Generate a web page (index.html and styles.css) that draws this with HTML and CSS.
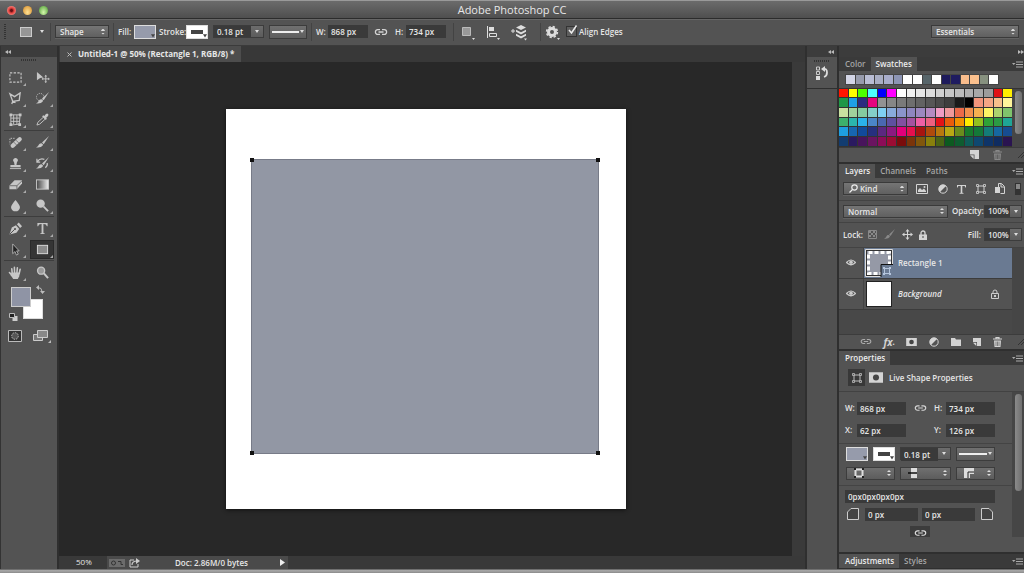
FILE: index.html
```html
<!DOCTYPE html>
<html lang="en">
<head>
<meta charset="utf-8">
<title>Adobe Photoshop CC</title>
<link rel="stylesheet" href="styles.css">
</head>
<body>
<svg class="defs" aria-hidden="true">
  <symbol id="link" viewBox="0 0 14 8"><path d="M6 1.600H3.800a2.400 2.400 0 0 0 0 4.800H6M8 1.600h2.200a2.400 2.400 0 0 1 0 4.800H8M4.500 4h5" fill="none" stroke="currentColor" stroke-width="1.300"/></symbol>
  <symbol id="menu" viewBox="0 0 11 7"><path d="M0 2h3.500L1.700 4z" fill="currentColor"/><path d="M4 1h7M4 3.500h7M4 6h7" stroke="currentColor"/></symbol>
  <symbol id="new" viewBox="0 0 9 9"><path d="M0 0h9v9H4.500V4.500H0z" fill="currentColor"/><path d="M0 5.300h3.700V9z" fill="currentColor"/></symbol>
  <symbol id="trash" viewBox="0 0 9 10"><path d="M0 2h9M3 2V.6h3V2" fill="none" stroke="currentColor" stroke-width="1.200"/><path d="M1 3.500h7L7.500 10h-6z" fill="currentColor"/><path d="M3 4.500V9M4.500 4.500V9M6 4.500V9" stroke="#444" stroke-width=".6"/></symbol>
  <symbol id="eye" viewBox="0 0 10 7"><path d="M.5 3.500Q5-1.500 9.500 3.500Q5 8 .5 3.500z" fill="none" stroke="currentColor" stroke-width="1.200"/><circle cx="5" cy="3.300" r="1.800" fill="currentColor"/></symbol>
  <symbol id="lock" viewBox="0 0 8 10"><path d="M2 5V3a2 2 0 0 1 4 0v2" fill="none" stroke="currentColor" stroke-width="1.300"/><path d="M0 4.500h8V10H0z" fill="currentColor"/><path d="M4 6v2" stroke="#444"/></symbol>
  <symbol id="mask" viewBox="0 0 12 9"><path d="M0 0h12v9H0z" fill="currentColor"/><circle cx="6" cy="4.500" r="2.600" fill="#444"/></symbol>
  <symbol id="adjust" viewBox="0 0 10 10"><circle cx="5" cy="5" r="4.200" fill="none" stroke="currentColor"/><path d="M8 2A4.200 4.200 0 1 0 2 8z" fill="currentColor"/></symbol>
  <symbol id="shape" viewBox="0 0 10 10"><path d="M2 2h6v6H2z" fill="none" stroke="currentColor"/><path d="M.5.5h2v2h-2zM7.500.5h2v2h-2zM.5 7.500h2v2h-2zM7.500 7.500h2v2h-2z" fill="#555" stroke="currentColor" stroke-width=".8"/></symbol>
  <symbol id="collapse" viewBox="0 0 6 4"><path d="M3 0v4L0 2zM6 0v4L3 2z" fill="currentColor"/></symbol>
  <symbol id="expand" viewBox="0 0 6 4"><path d="M0 0v4l3-2zM3 0v4l3-2z" fill="currentColor"/></symbol>
  <symbol id="grip" viewBox="0 0 6 6"><path d="M0 6L6 0M3 6l3-3" stroke="#333"/></symbol>
  <symbol id="brush" viewBox="0 0 16 14"><path d="M15 0L7.500 7l1.800 1.800z" fill="currentColor"/><path d="M6.800 7.700q2.500.8 1.500 2.500Q6.500 13 1 12.300q2.500-.8 3-2.800.8-2 2.800-1.800z" fill="currentColor"/></symbol>
</svg>

<div class="app">
  <header class="titlebar">
    <div class="lights">
      <button class="light red" aria-label="Close"></button>
      <button class="light amber" aria-label="Minimize"></button>
      <button class="light green" aria-label="Zoom"></button>
    </div>
    <h1>Adobe Photoshop CC</h1>
    <div class="lights"></div>
  </header>

  <div class="options">
    <span class="vgrip"></span>
    <button class="preset" aria-label="Tool preset"><i class="preset-box"></i><i class="caret"></i></button>
    <span class="divider"></span>
    <span class="pick pick-shape"><select aria-label="Tool mode"><option>Shape</option></select></span>
    <span class="divider"></span>
    <span class="label lb-fill">Fill:</span>
    <button class="chip" aria-label="Fill colour"><i></i></button>
    <span class="label lb-stroke">Stroke:</span>
    <button class="chip stroke" aria-label="Stroke colour"><i></i></button>
    <span class="combo"><input aria-label="Stroke width" value="0.18 pt"><button aria-label="Stroke width list"><i class="caret"></i></button></span>
    <button class="line-pick" aria-label="Stroke style"><i class="line"></i><i class="caret"></i></button>
    <span class="divider"></span>
    <label class="label lb-w" for="ow">W:</label><input id="ow" class="size" value="868 px">
    <button class="icon link-size" aria-label="Link width and height"><svg width="14" height="8"><use href="#link"/></svg></button>
    <label class="label lb-h" for="oh">H:</label><input id="oh" class="size" value="734 px">
    <span class="divider div-wide"></span>
    <button class="icon opt-icon" aria-label="Path operations"><svg width="16" height="18" viewBox="0 0 16 18"><path d="M1.500 4.500h8v8h-8z" fill="#999" stroke="#bbb"/><path d="M11 15h3l-1.500 2z" fill="#ddd"/></svg></button>
    <button class="icon opt-icon" aria-label="Path alignment"><svg width="16" height="18" viewBox="0 0 16 18"><path d="M1.500 3v12" stroke="#ddd"/><path d="M3 4h5v4H3z" fill="#ddd"/><path d="M3.500 10.500h7v3h-7z" fill="none" stroke="#ddd"/><path d="M11 15h3l-1.500 2z" fill="#ddd"/></svg></button>
    <button class="icon opt-icon" aria-label="Path arrangement"><svg width="18" height="18" viewBox="0 0 18 18"><path d="M0 8h4M2 6v4" stroke="#ddd"/><path d="M10 2l5 2.500-5 2.500-5-2.500zM5 6.800l5 2.500 5-2.500v2l-5 2.700-5-2.700zM5 10.800l5 2.500 5-2.500v2l-5 2.700-5-2.700z" fill="#ddd"/><path d="M13 15.500h3l-1.500 2z" fill="#ddd"/></svg></button>
    <span class="divider"></span>
    <button class="icon gear" aria-label="Settings"><svg width="16" height="18" viewBox="0 0 16 18"><circle cx="7" cy="9" r="3.500" fill="none" stroke="#ddd" stroke-width="3"/><circle cx="7" cy="9" r="5.400" fill="none" stroke="#ddd" stroke-width="1.600" stroke-dasharray="2.300 1.940"/><path d="M12 15h3l-1.500 2z" fill="#ddd"/></svg></button>
    <label class="check"><input type="checkbox" checked><svg width="12" height="14" viewBox="0 0 12 14"><path d="M3 6l2.500 3L10.500 1.500" fill="none" stroke="#eee" stroke-width="1.500"/></svg>Align Edges</label>
    <span class="pick pick-space"><select aria-label="Workspace"><option>Essentials</option></select></span>
  </div>

  <div class="workspace">
    <aside class="tools">
      <div class="colhead"><svg width="6" height="4"><use href="#collapse"/></svg></div>
      <div class="tools-body">
        <span class="hgrip"></span>
        <div class="toolgrid">
          <button class="tool sub" aria-label="Marquee"><svg viewBox="0 0 16 14"><rect x="2" y="2" width="12" height="10" fill="none" stroke="currentColor" stroke-width="1.200" stroke-dasharray="2.500 1.500"/></svg></button>
          <button class="tool" aria-label="Move"><svg viewBox="0 0 16 14"><path d="M2 1l7 6-3.500.5L2 10z" fill="currentColor"/><path d="M11.500 5v7M8 8.500h7" stroke="currentColor"/><path d="M10 5.800h3L11.500 4zM10 11.200h3L11.500 13zM8.800 7v3L7 8.500zM14.200 7v3L16 8.500z" fill="currentColor"/></svg></button>
          <button class="tool sub" aria-label="Lasso"><svg viewBox="0 0 16 14"><path d="M2 2l5 3 6-4-1 8-7 1zM5 10l-1 3M5 10l3 1.500" fill="none" stroke="currentColor" stroke-width="1.400"/></svg></button>
          <button class="tool sub" aria-label="Quick selection"><svg viewBox="0 0 16 14"><use href="#brush"/><circle cx="5.500" cy="5.500" r="4" fill="none" stroke="currentColor" stroke-dasharray="1.200 1.200"/></svg></button>
          <button class="tool sub" aria-label="Perspective crop"><svg viewBox="0 0 16 14"><path d="M3 2l10 0-1 10-9 1zM6 2v10M9.500 2v10M3 5.500h9.500M3 9h9.500" fill="none" stroke="currentColor"/><path d="M1.500.5h3v3h-3zM11.500.5h3v3h-3zM1.500 11h3v3h-3zM11 11h3v3h-3z" fill="currentColor"/></svg></button>
          <button class="tool sub" aria-label="Eyedropper"><svg viewBox="0 0 16 14"><path d="M2 13l1-3 6-5.500 2 2L5 12z" fill="none" stroke="currentColor"/><path d="M7.500 3.500l1.500-1 1 .8Q12-.5 14 1q1.300 2-2 4l.7 1.200-1.200 1.300z" fill="currentColor"/></svg></button>
          <span class="rule"></span>
          <button class="tool sub" aria-label="Healing brush"><svg viewBox="0 0 16 14"><path d="M5 10.500L12.500 3.500" stroke="currentColor" stroke-width="4.600" stroke-linecap="round"/><path d="M6 6.500l4 4M8.500 4.500l4 4" stroke="#555" stroke-width=".7"/><path d="M7 2.500H2V9" fill="none" stroke="currentColor" stroke-dasharray="1.500 1.200"/></svg></button>
          <button class="tool sub" aria-label="Brush"><svg viewBox="0 0 16 14"><use href="#brush"/></svg></button>
          <button class="tool sub" aria-label="Clone stamp"><svg viewBox="0 0 16 14"><path d="M8 1a2.500 2.500 0 0 1 1.600 4.500L9 8.500h4.500V11h-11V8.500H7L6.400 5.500A2.500 2.500 0 0 1 8 1z" fill="currentColor"/><path d="M2 12.500h12" stroke="currentColor"/></svg></button>
          <button class="tool sub" aria-label="History brush"><svg viewBox="0 0 16 14"><use href="#brush"/><path d="M2 2v3.500h3.500M2.500 5Q5 1 10 2.500M11 11.500q3-2 2-5" fill="none" stroke="currentColor" stroke-width="1.300"/></svg></button>
          <button class="tool sub" aria-label="Eraser"><svg viewBox="0 0 16 14"><path d="M1.500 8L7 2.500h8V6L9.500 12h-8z" fill="currentColor"/><path d="M1.500 8.300h8L15 3M9.500 8.300V12" fill="none" stroke="#555" stroke-width=".8"/></svg></button>
          <button class="tool sub" aria-label="Gradient"><svg viewBox="0 0 16 14"><defs><linearGradient id="gr"><stop stop-color="#444"/><stop offset="1" stop-color="#eee"/></linearGradient></defs><rect x="1.500" y="2" width="13" height="10" fill="url(#gr)" stroke="currentColor"/></svg></button>
          <button class="tool sub" aria-label="Blur"><svg viewBox="0 0 16 14"><path d="M8 1q4.800 5.500 4.800 8a4.800 4.300 0 0 1-9.600 0Q3.200 6.500 8 1z" fill="currentColor"/></svg></button>
          <button class="tool sub" aria-label="Dodge"><svg viewBox="0 0 16 14"><circle cx="6" cy="5" r="4.500" fill="currentColor"/><path d="M9 8l5 5" stroke="currentColor" stroke-width="2"/></svg></button>
          <span class="rule"></span>
          <button class="tool sub" aria-label="Pen"><svg viewBox="0 0 16 14"><path d="M1.500 13.500L4 6l4.500-2.500 3.500 4-3 4z" fill="currentColor"/><path d="M9.500 2.500l2-2 3.500 4-2 2z" fill="currentColor"/><path d="M2 13l5-5" stroke="#444"/><circle cx="7.500" cy="7.500" r="1" fill="#444"/></svg></button>
          <button class="tool sub" aria-label="Type"><svg viewBox="0 0 16 14"><path d="M2.500 1h11v3.500h-.8Q12.200 2 9 2.200V11.500q0 .8 1.500.8v.7H5.500v-.7q1.500 0 1.500-.8V2.200Q3.800 2 3.300 4.500h-.8z" fill="currentColor"/></svg></button>
          <button class="tool sub" aria-label="Path selection"><svg viewBox="0 0 16 14"><path d="M5 1v10.500l2.500-2.300L9 13l2-1-1.800-3.500H12z" fill="#222" stroke="#bbb" stroke-width=".9"/></svg></button>
          <button class="tool sub on" aria-label="Rectangle"><svg viewBox="0 0 16 14"><rect x="2.500" y="2.500" width="11" height="9" fill="#8b8b8b" stroke="#ddd"/></svg></button>
          <span class="rule"></span>
          <button class="tool sub" aria-label="Hand"><svg viewBox="0 0 16 14"><path d="M4.500 8L4 3M7 7.500L6.800 1.500M9.500 7.500L10 2M12 8l1-4.500M4.500 10.500L1.500 7" stroke="currentColor" stroke-width="1.700" stroke-linecap="round"/><path d="M3.800 7h9L12 11l-1.500 3h-5L3 10z" fill="currentColor"/></svg></button>
          <button class="tool" aria-label="Zoom tool"><svg viewBox="0 0 16 14"><circle cx="6.500" cy="5" r="3.800" fill="#999" stroke="currentColor" stroke-width="1.500"/><path d="M9.500 8l4.500 5" stroke="currentColor" stroke-width="2.200"/></svg></button>
        </div>
        <div class="colors">
          <button class="bg" aria-label="Background colour"></button>
          <button class="fg" aria-label="Foreground colour"></button>
          <svg class="swap" width="9" height="9" viewBox="0 0 9 9"><path d="M2 2.500q4 0 4 4" fill="none" stroke="currentColor"/><path d="M3 0v5L0 2.500zM4 6h5L6.500 9z" fill="currentColor"/></svg>
          <svg class="reset" width="9" height="8" viewBox="0 0 9 8"><path d="M3.500 3h5v5h-5z" fill="#ccc"/><path d="M.5.5h5v4h-5z" fill="#222" stroke="#bbb"/></svg>
        </div>
        <div class="modes">
          <button class="icon" aria-label="Quick mask"><svg width="14" height="12" viewBox="0 0 14 12"><path d="M.5.5h13v11H.5z" fill="#333" stroke="#bbb"/><circle cx="7" cy="6" r="3.300" fill="#555" stroke="#bbb" stroke-dasharray="1.500 1"/></svg></button>
          <button class="icon" aria-label="Screen mode"><svg width="18" height="14" viewBox="0 0 18 14"><path d="M.5 5.500h9v6h-9z" fill="#777" stroke="#ccc"/><path d="M4.500 1.500h10v7h-10z" fill="#888" stroke="#ccc"/><path d="M18 11v3h-3z" fill="#bbb"/></svg></button>
        </div>
      </div>
    </aside>

    <main class="document">
      <div class="doctabs"><div class="doctab"><button aria-label="Close document"><svg width="5" height="5" viewBox="0 0 5 5"><path d="M.5.5l4 4M4.500.5l-4 4" stroke="#bbb"/></svg></button>Untitled-1 @ 50% (Rectangle 1, RGB/8) *</div></div>
      <div class="stage">
        <div class="canvas"><div class="artboard"><div class="rect"><i class="h tl"></i><i class="h tr"></i><i class="h bl"></i><i class="h br"></i></div></div></div>
        <div class="vscroll"></div>
      </div>
      <div class="status">
        <span class="zoom">50%</span>
        <div class="docinfo">
          <svg width="32" height="10" viewBox="0 0 32 10"><path d="M0 1h16v8H0z" fill="#6c6c6c"/><circle cx="4.500" cy="5" r="2" fill="none" stroke="#333"/><path d="M9 3.500h3v3h2" fill="none" stroke="#333"/><path d="M25 2h-4v7h8V6" fill="none" stroke="#ccc"/><path d="M23 7q0-4 5-4" fill="none" stroke="#ccc" stroke-width="1.200"/><path d="M27 0l4 3-4 3z" fill="#ccc"/></svg>
          <span class="bytes">Doc: 2.86M/0 bytes</span>
          <button aria-label="Status options"><svg width="5" height="7" viewBox="0 0 5 7"><path d="M0 0l5 3.500L0 7z" fill="#eee"/></svg></button>
        </div>
      </div>
    </main>

    <aside class="strip">
      <div class="colhead"><svg width="6" height="4"><use href="#collapse"/></svg></div>
      <div class="strip-item"><span class="hgrip"></span>
        <button class="icon" aria-label="History"><svg width="14" height="16" viewBox="0 0 14 16"><path d="M1.500 2h3v3h-3zM1.500 6.500h3v3h-3z" fill="none" stroke="#ccc"/><path d="M1 11h4v4H1z" fill="#ddd"/><path d="M8 4q4-1 4 3.500Q12 11 9 12" fill="none" stroke="#ddd" stroke-width="1.800"/><path d="M6 4l4-3v6z" fill="#ddd"/></svg></button>
      </div>
      <div class="strip-rest"></div>
    </aside>

    <aside class="panels">
      <div class="colhead end"><svg width="6" height="4"><use href="#expand"/></svg></div>

      <section class="panel">
        <div class="tabs"><button class="tab">Color</button><button class="tab active">Swatches</button><svg class="menu" width="11" height="7"><use href="#menu"/></svg></div>
        <div class="recent" id="recent"></div>
        <div class="palette-row"><div class="palette" id="palette"></div><div class="track"><i class="thumb thumb-sw"></i></div></div>
        <div class="foot foot-sw"><button class="icon" aria-label="New swatch"><svg width="9" height="9"><use href="#new"/></svg></button><button class="icon dim" aria-label="Delete swatch"><svg width="9" height="10"><use href="#trash"/></svg></button><svg width="6" height="6"><use href="#grip"/></svg></div>
      </section>

      <section class="panel">
        <div class="tabs"><button class="tab active">Layers</button><button class="tab">Channels</button><button class="tab">Paths</button><svg class="menu" width="11" height="7"><use href="#menu"/></svg></div>
        <div class="row filter">
          <span class="pick pick-kind"><svg width="9" height="9" viewBox="0 0 9 9"><circle cx="5.500" cy="3.500" r="2.700" fill="none" stroke="#eee" stroke-width="1.200"/><path d="M3.500 5.500L.5 8.500" stroke="#eee" stroke-width="1.300"/></svg><select aria-label="Filter kind"><option>Kind</option></select></span>
          <div class="filters">
            <button class="icon" aria-label="Pixel layers"><svg width="12" height="10" viewBox="0 0 12 10"><path d="M.5.5h11v9H.5z" fill="none" stroke="currentColor"/><path d="M2 8V6l2-2 2 2 2-1.500L10 7v1z" fill="currentColor"/><circle cx="8.500" cy="3" r="1" fill="currentColor"/></svg></button>
            <button class="icon" aria-label="Adjustment layers"><svg width="10" height="10"><use href="#adjust"/></svg></button>
            <button class="icon" aria-label="Type layers"><svg width="9" height="10" viewBox="0 0 9 10"><path d="M0 1h9v2.500H8.300L7.700 2H5.300v6.700l1.200.3v.8h-4V9l1.200-.3V2H1.300L.7 3.500H0z" fill="currentColor"/></svg></button>
            <button class="icon" aria-label="Shape layers"><svg width="10" height="10"><use href="#shape"/></svg></button>
            <button class="icon" aria-label="Smart objects"><svg width="10" height="11" viewBox="0 0 10 11"><path d="M3.500 4V.5h3l3 3v7h-4" fill="none" stroke="currentColor"/><path d="M0 4h5v6H0z" fill="currentColor"/><path d="M6 1v3h3" fill="none" stroke="currentColor"/></svg></button>
            <button class="switch" aria-label="Filter on or off"></button>
          </div>
        </div>
        <div class="row blend">
          <span class="pick pick-blend"><select aria-label="Blend mode"><option>Normal</option></select></span>
          <label class="label" for="op">Opacity:</label>
          <span class="combo pct"><input id="op" value="100%"><button aria-label="Opacity slider"><i class="caret"></i></button></span>
        </div>
        <div class="row locks">
          <span class="label">Lock:</span>
          <div class="lockset">
            <button class="icon dim" aria-label="Lock transparency"><svg width="9" height="9" viewBox="0 0 9 9"><path d="M.5.5h8v8h-8z" fill="none" stroke="currentColor"/><path d="M1 1h2v2H1zM5 1h2v2H5zM3 3h2v2H3zM7 3h1v2H7zM1 5h2v2H1zM5 5h2v2H5z" fill="currentColor"/></svg></button>
            <button class="icon dim" aria-label="Lock pixels"><svg width="13" height="11"><use href="#brush"/></svg></button>
            <button class="icon" aria-label="Lock position"><svg width="11" height="11" viewBox="0 0 11 11"><path d="M5.500 1v9M1 5.500h9" stroke="currentColor"/><path d="M3.500 2.500h4L5.500 0zM3.500 8.500h4l-2 2.500zM2.500 3.500v4L0 5.500zM8.500 3.500v4l2.500-2z" fill="currentColor"/></svg></button>
            <button class="icon" aria-label="Lock all"><svg width="8" height="10"><use href="#lock"/></svg></button>
          </div>
          <label class="label push" for="fo">Fill:</label>
          <span class="combo pct"><input id="fo" value="100%"><button aria-label="Fill slider"><i class="caret"></i></button></span>
        </div>
        <div class="layers">
          <div class="layerlist">
            <div class="layer">
              <button class="eye" aria-label="Layer visibility"><svg width="10" height="7"><use href="#eye"/></svg></button>
              <div class="lbody sel"><svg width="28" height="28" viewBox="0 0 28 28"><path d="M.5.5h27v27H.5z" fill="#333" stroke="#ddd"/><path d="M2 2h24v24H2z" fill="#9599a6"/><path d="M3.500 3.500h21v21h-21z" fill="none" stroke="#fff" stroke-width="3" stroke-dasharray="4 2"/><path d="M16 28V16h12v12z" fill="#6b7b93"/><path d="M28 15.500H16V28" fill="none" stroke="#111"/><path d="M19.500 19.500h5v5h-5z" fill="none" stroke="#b5c5dc"/><path d="M18 18h2v2h-2zM24 18h2v2h-2zM18 24h2v2h-2zM24 24h2v2h-2z" fill="#b5c5dc"/></svg><span>Rectangle 1</span></div>
            </div>
            <div class="layer">
              <button class="eye" aria-label="Layer visibility"><svg width="10" height="7"><use href="#eye"/></svg></button>
              <div class="lbody"><i class="thumb-bg"></i><span class="it">Background</span><svg class="llock" width="8" height="10" viewBox="0 0 8 10"><path d="M2 5V3a2 2 0 0 1 4 0v2" fill="none" stroke="#ccc"/><path d="M.5 4.500h7v5h-7z" fill="#555" stroke="#ccc"/><path d="M3 6h2v2H3z" fill="#ccc"/></svg></div>
            </div>
          </div>
          <div class="track"></div>
        </div>
        <div class="foot foot-layers">
          <button class="icon dim2" aria-label="Link layers"><svg width="12" height="7"><use href="#link"/></svg></button>
          <button class="icon fx" aria-label="Layer style">fx<small>.</small></button>
          <button class="icon" aria-label="Add mask"><svg width="11" height="8"><use href="#mask"/></svg></button>
          <button class="icon" aria-label="Add adjustment"><svg width="10" height="10"><use href="#adjust"/></svg></button>
          <button class="icon" aria-label="New group"><svg width="10" height="8" viewBox="0 0 10 8"><path d="M0 0h4l1 1.500h5V8H0z" fill="currentColor"/></svg></button>
          <button class="icon" aria-label="New layer"><svg width="8" height="8"><use href="#new"/></svg></button>
          <button class="icon" aria-label="Delete layer"><svg width="9" height="10"><use href="#trash"/></svg></button>
          <svg width="6" height="6"><use href="#grip"/></svg>
        </div>
      </section>

      <section class="panel props">
        <div class="tabs"><button class="tab active">Properties</button><svg class="menu" width="11" height="7"><use href="#menu"/></svg></div>
        <div class="prophead"><button class="shapebtn" aria-label="Shape properties"><svg width="10" height="10"><use href="#shape"/></svg></button><button class="icon" aria-label="Mask properties"><svg width="14" height="11"><use href="#mask"/></svg></button><h2>Live Shape Properties</h2></div>
        <div class="propscroll">
          <div class="propbody">
            <div class="dims">
              <label for="pw">W:</label><input id="pw" value="868 px"><button class="icon" aria-label="Link dimensions"><svg width="13" height="8"><use href="#link"/></svg></button><label for="ph">H:</label><input id="ph" value="734 px">
              <label for="px">X:</label><input id="px" value="62 px"><span></span><label for="py">Y:</label><input id="py" value="126 px">
            </div>
            <div class="looks">
              <span class="chips"><button class="chip" aria-label="Shape fill"><i></i></button><button class="chip stroke" aria-label="Shape stroke"><i></i></button></span>
              <span class="combo"><input aria-label="Shape stroke width" value="0.18 pt"><button aria-label="Shape stroke width list"><i class="caret"></i></button></span>
              <button class="line-pick" aria-label="Shape stroke style"><i class="line"></i><i class="caret"></i></button>
              <button class="mini" aria-label="Stroke alignment"><svg width="10" height="10" viewBox="0 0 10 10"><path d="M1.500 1.500h7v7h-7z" fill="none" stroke="#ddd" stroke-width="2"/><path d="M0 0h2v2H0zM8 0h2v2H8zM0 8h2v2H0zM8 8h2v2H8z" fill="#222"/></svg></button>
              <button class="mini" aria-label="Line cap"><svg width="10" height="10" viewBox="0 0 10 10"><path d="M3 0h6v4H3zM3 6h6v4H3z" fill="#ddd"/><path d="M2 5h7" stroke="#222"/><path d="M0 4h3v2H0z" fill="#222"/></svg></button>
              <button class="mini" aria-label="Line join"><svg width="10" height="10" viewBox="0 0 10 10"><path d="M0 0h10v6H6v4H0z" fill="#ddd"/><path d="M10 4H4v6" fill="none" stroke="#222"/></svg></button>
            </div>
            <div class="corners">
              <input class="radii" aria-label="Corner radii" value="0px0px0px0px">
              <div class="corner-row"><svg width="12" height="12" viewBox="0 0 12 12"><path d="M.5 11.500V4L4 .5h7.500v11z" fill="#444" stroke="#ccc"/></svg><input aria-label="Top left radius" value="0 px"><input aria-label="Top right radius" value="0 px"><svg width="12" height="12" viewBox="0 0 12 12"><path d="M.5 11.500V.5H8L11.500 4v7.500z" fill="#444" stroke="#ccc"/></svg></div>
              <button class="cornerlink" aria-label="Link radii"><svg width="13" height="8"><use href="#link"/></svg></button>
            </div>
          </div>
          <div class="track"><i class="thumb thumb-props"></i></div>
        </div>
        <div class="propfoot"></div>
      </section>

      <section class="panel">
        <div class="tabs"><button class="tab active">Adjustments</button><button class="tab">Styles</button><svg class="menu" width="11" height="7"><use href="#menu"/></svg></div>
      </section>
    </aside>
  </div>
  <div class="desk"></div>
</div>
<script src="script.js"></script>
</body>
</html>
```
FILE: styles.css
```css
* { box-sizing: border-box; }
body { margin: 0; }
body, button, input, select { font: 600 8px/12px "Open Sans", "Noto Sans", sans-serif; color: #e6e6e6; }
button, input, select { margin: 0; padding: 0; border: 0; border-radius: 0; background: none; outline: 0; }
h1, h2 { margin: 0; }
svg { display: block; flex: none; }
.defs { position: absolute; width: 0; height: 0; }

.app { display: flex; flex-direction: column; height: 100vh; background: #333; overflow: hidden; }
.titlebar { display: flex; align-items: center; justify-content: space-between; height: 19px; flex: none; padding-top: 1px; border-top: 1px solid #999; border-bottom: 1px solid #2c2c2c; background: linear-gradient(#6b6b6b, #4f4f4f); }
.titlebar h1 { font-size: 11px; line-height: 16px; font-weight: 400; color: #e8e8e8; }
.lights { display: flex; gap: 7px; width: 60px; padding-left: 7px; }
.light { width: 9px; height: 9px; border-radius: 50%; }
.red { background: radial-gradient(#651015 15%, #e8433f 40%, #f5b0a8); }
.amber { background: radial-gradient(at 50% 70%, #ffe193, #dc9b3d 80%); }
.green { background: radial-gradient(at 50% 70%, #d4f6ac, #65ad48 80%); }

.options { display: flex; align-items: center; height: 27px; flex: none; padding: 0 5px 2px 4px; border-top: 1px solid #666; border-bottom: 1px solid #3b3b3b; background: #535353; }
.vgrip { width: 2px; height: 16px; background: repeating-linear-gradient(#333 0 1px, transparent 1px 2px); }
.preset { display: flex; align-items: center; gap: 8px; margin: 0 2px 0 14px; }
.preset-box { width: 12px; height: 10px; border: 1px solid #ccc; background: #969696; }
.caret { width: 0; height: 0; border: 2px solid transparent; border-top: 3px solid #ddd; border-bottom: 0; flex: none; }
.divider { width: 1px; height: 18px; margin: 0 4px; background: #434343; flex: none; }
.div-wide { margin: 0 7px; }
.pick { position: relative; display: flex; align-items: center; height: 13px; border: 1px solid #3a3a3a; background: linear-gradient(#757575, #606060); box-shadow: 0 1px #626262; }
.pick select { flex: 1; min-width: 0; height: 11px; padding-left: 4px; line-height: 11px; appearance: none; }
.pick::after, .mini::after { content: ""; width: 4px; height: 6px; margin-right: 3px; background: linear-gradient(#ddd 2px, transparent 2px 4px, #ddd 4px); clip-path: polygon(50% 0, 100% 33%, 100% 67%, 50% 100%, 0 67%, 0 33%); }
.pick-shape { width: 54px; }
.pick-space { width: 88px; margin-left: auto; }
.label { white-space: nowrap; }
.lb-fill { width: 16px; }
.lb-stroke { width: 27px; margin-left: 3px; }
.lb-w { width: 12px; }
.lb-h { width: 11px; }
.chip { position: relative; width: 22px; height: 14px; flex: none; border: 1px solid #ddd; background: #969bab; }
.chip::after { content: ""; position: absolute; right: 0; bottom: 0; width: 4px; height: 4px; background: #444; clip-path: polygon(0 20%, 100% 20%, 50% 100%); }
.chip.stroke { background: #fff; display: flex; align-items: center; justify-content: center; }
.chip.stroke i { width: 12px; height: 4px; background: #444; }
.combo { display: flex; width: 51px; height: 13px; border: 1px solid #3c3c3c; }
.options .combo { margin: 0 5px; }
.combo input { flex: 1; min-width: 0; padding-left: 3px; background: #3a3a3a; }
.combo button { display: flex; align-items: center; justify-content: center; width: 12px; background: linear-gradient(#6c6c6c, #5c5c5c); }
.combo.pct { width: 38px; }
.combo.pct button { width: 11px; }
.line-pick { display: flex; align-items: center; gap: 1px; width: 38px; height: 14px; padding: 0 2px; border: 1px solid #3c3c3c; background: linear-gradient(#707070, #5e5e5e); }
.line { flex: 1; height: 2px; background: #eee; }
.size { width: 40px; height: 13px; padding-left: 3px; background: #3a3a3a; }
.icon { display: flex; align-items: center; justify-content: center; color: #d4d4d4; }
.dim { color: #898989; }
.dim2 { color: #aaa; }
.link-size { margin: 0 7px 0 6px; }
.opt-icon { width: 25px; justify-content: flex-start; }
.gear { width: 21px; justify-content: flex-start; }
.check { position: relative; display: flex; align-items: center; gap: 2px; white-space: nowrap; }
.check input { appearance: none; width: 11px; height: 11px; border: 1px solid #333; background: #5e5e5e; }
.check svg { position: absolute; left: 0; top: -2px; }

.workspace { display: flex; flex: 1; min-height: 0; gap: 2px; background: #2f2f2f; }
.colhead { display: flex; align-items: center; height: 11px; padding: 0 4px; flex: none; background: #3c3c3c; color: #bbb; }
.hgrip { width: 16px; height: 2px; margin: 3px auto; background: repeating-linear-gradient(90deg, #333 0 1px, transparent 1px 2px); }

.tools { display: flex; flex-direction: column; width: 57px; flex: none; border-left: 1px solid #333; }
.tools-body { display: flex; flex-direction: column; flex: 1; background: #535353; }
.tools .hgrip { margin-top: 2px; }
.toolgrid { display: grid; grid-template-columns: 27px 27px; padding: 3px 1px 0; }
.tool { position: relative; display: flex; align-items: center; justify-content: center; height: 21px; color: #c6c6c6; }
.tool svg { width: 15px; height: 13px; }
.tool.sub::after { content: ""; position: absolute; right: 3px; bottom: 2px; width: 3px; height: 3px; background: #aaa; clip-path: polygon(100% 0, 100% 100%, 0 100%); }
.tool.on { height: 19px; margin: 1px 2px 1px 1px; background: #353535; border: 1px solid #2a2a2a; }
.tool.on.sub::after { right: 0; bottom: 0; }
.rule { grid-column: 1 / -1; height: 1px; margin: 0 2px 1px; background: #3d3d3d; }
.colors { position: relative; width: 36px; height: 36px; margin: 2px 0 0 8px; }
.fg, .bg { position: absolute; width: 20px; height: 20px; }
.fg { left: 2px; top: 2px; border: 1px solid #ccc; background: #8f94a5; }
.bg { left: 14px; top: 14px; border: 1px solid #ddd; background: #fff; }
.swap { position: absolute; left: 27px; top: 0; color: #bbb; }
.reset { position: absolute; left: 0; top: 28px; }
.modes { display: flex; gap: 11px; padding: 8px 0 0 7px; }

.document { display: flex; flex-direction: column; flex: 1; min-width: 0; }
.doctabs { display: flex; height: 16px; flex: none; padding-left: 1px; background: #383838; }
.doctab { display: flex; align-items: center; gap: 6px; padding: 0 7px; background: #4d4d4d; font-weight: 700; white-space: nowrap; }
.stage { display: flex; flex: 1; min-height: 0; }
.canvas { display: flex; flex: 1; align-items: center; justify-content: center; background: #282828; }
.artboard { width: 400px; height: 400px; padding: 50px 27px 55px 25px; background: #fff; box-shadow: 0 1px 4px #111; }
.rect { position: relative; width: 100%; height: 100%; border: 1px solid #777b88; background: #9297a4; }
.h { position: absolute; width: 4px; height: 4px; background: #111; }
.tl { left: -2px; top: -2px; }
.tr { right: -2px; top: -2px; }
.bl { left: -2px; bottom: -2px; }
.br { right: -2px; bottom: -2px; }
.vscroll { width: 13px; background: #3a3a3a; }
.status { display: flex; height: 13px; flex: none; background: #393939; }
.zoom { width: 48px; padding-left: 17px; font-weight: 400; }
.docinfo { display: flex; align-items: center; width: 181px; padding: 0 3px 0 2px; background: #4a4a4a; }
.bytes { flex: 1; padding-left: 34px; }

.strip { display: flex; flex-direction: column; width: 30px; flex: none; }
.strip .colhead { justify-content: flex-end; padding-right: 3px; }
.strip-item { display: flex; flex-direction: column; align-items: center; height: 31px; background: #535353; }
.strip-rest { flex: 1; margin-top: 1px; background: #515151; }

.panels { display: flex; flex-direction: column; width: 185px; flex: none; }
.end { justify-content: flex-end; padding-right: 0; }
.panel { margin-bottom: 2px; background: #535353; }
.tabs { display: flex; height: 14px; background: #3a3a3a; }
.tab { padding: 0 5px; color: #a5a5a5; }
.tab:first-child { padding-left: 6px; }
.tab.active { background: #535353; color: #ececec; }
.menu { margin: 4px 1px 0 auto; color: #aaa; }
.recent { display: grid; grid-template-columns: repeat(16, 1fr); gap: 1px; margin: 3px 25px 3px 6px; border: 1px solid #444; background: #444; }
.recent i, .palette i { aspect-ratio: 1; }
.palette-row { display: flex; height: 59px; border-top: 1px solid #333; }
.palette { display: grid; grid-template-columns: repeat(18, 1fr); align-content: start; gap: 1px; flex: 1; background: #333; overflow: hidden; }
.track { width: 12px; flex: none; padding: 2px 3px; background: #464646; }
.thumb { display: block; width: 7px; border-radius: 4px; background: linear-gradient(90deg, #8a8a8a, #707070); }
.thumb-sw { height: 43px; }
.thumb-props { height: 97px; }
.foot { display: flex; align-items: center; justify-content: flex-end; border-top: 1px solid #3c3c3c; }
.foot-sw { height: 15px; gap: 14px; }

.row { display: flex; align-items: center; padding-left: 4px; border-bottom: 1px solid #434343; }
.filter { height: 23px; }
.pick-kind { width: 65px; }
.pick-kind svg { margin-left: 5px; }
.pick-kind select { padding-left: 2px; }
.filters { display: flex; flex: 1; align-items: center; justify-content: space-between; padding: 0 3px 0 8px; }
.switch { width: 6px; height: 12px; border: 1px solid #333; background: linear-gradient(#888 50%, #333 50%); }
.blend { height: 22px; }
.pick-blend { width: 105px; margin-right: 4px; }
.blend .combo { margin: 0 2px 0 auto; }
.locks { height: 25px; }
.lockset { display: flex; align-items: center; gap: 6px; margin-left: 5px; }
.push { margin: 0 3px 0 auto; }
.locks .combo { margin-right: 2px; }
.layers { display: flex; height: 86px; }
.layerlist { flex: 1; background: #484848; }
.layer { display: flex; height: 31px; border-bottom: 1px solid #3c3c3c; background: #535353; }
.eye { display: flex; align-items: center; justify-content: center; width: 25px; color: #ccc; border-right: 1px solid #444; }
.lbody { display: flex; align-items: center; flex: 1; gap: 5px; padding-left: 1px; }
.sel { background: #6a7a92; }
.thumb-bg { width: 26px; height: 26px; margin: 0 1px; border: 1px solid #222; background: #fff; }
.it { font-style: italic; }
.llock { margin: 0 13px 0 auto; }
.foot-layers { height: 15px; gap: 12px; }
.foot-layers .fx { margin-right: -1px; }
.fx { font: italic 700 10px/10px "Open Sans", "Noto Sans", sans-serif; }
.foot-layers > svg { margin-left: 4px; }
.foot-sw > svg { margin-left: 2px; }

.prophead { display: flex; align-items: center; height: 27px; padding-left: 9px; gap: 4px; border-bottom: 1px solid #424242; }
.prophead h2 { font-size: 8px; line-height: 12px; font-weight: 600; margin-left: 2px; }
.shapebtn { display: flex; align-items: center; justify-content: center; width: 17px; height: 17px; background: #383838; color: #bbb; }
.propscroll { display: flex; height: 145px; overflow: hidden; }
.propbody { flex: 1; min-width: 0; }
.propbody input { width: 100%; height: 13px; padding-left: 3px; background: #3a3a3a; min-width: 0; }
.dims { display: grid; grid-template-columns: 12px 49px 28px 12px 49px; row-gap: 9px; padding: 10px 0 6px 6px; align-items: center; border-bottom: 1px solid #444; }
.looks { display: grid; grid-template-columns: 49px 51px 39px; gap: 6px 5px; padding: 3px 0 5px 7px; align-items: center; border-bottom: 1px solid #444; }
.chips { display: flex; gap: 5px; }
.looks .line-pick { width: 100%; }
.mini { display: flex; align-items: center; height: 13px; padding-left: 7px; border: 1px solid #3d3d3d; background: linear-gradient(#707070, #5c5c5c); }
.mini::after { margin-left: auto; }
.corners { display: flex; flex-direction: column; gap: 5px; padding: 4px 17px 0 6px; }
.corner-row { display: flex; gap: 4px; padding: 0 2px; }
.corner-row svg:first-child { margin-right: 2px; }
.corner-row svg:last-child { margin-left: 2px; }
.cornerlink { display: flex; align-items: center; justify-content: center; align-self: center; width: 20px; height: 15px; background: #3c3c3c; color: #ddd; }
.propfoot { height: 15px; }
.desk { height: 4px; flex: none; background: linear-gradient(#555, #aaa 40%, #8a8a8a); }
```
FILE: script.js
```js
const recent = "d3d5e6 979bac b9bdd4 a9aec4 a8adcb 8c94b4 fff fff 57656a fff 1d1a5c 1f1c60 f9bd8c fbc08d 87917f fff";
const palette = `
ff1500 ffff00 4dff00 4dffff 0000ff ff00ff ffffff f0f0f0 e6e6e6 dcdcdc d0d0d0 c6c6c6 bcbcbc b0b0b0 a8a8a8 9c9c9c df1216 ffef00
1f9747 1f9fe6 2c2b80 e6047f 929292 868686 7a7a7a 6e6e6e 626262 565656 4a4a4a 3e3e3e 1a1a1a 000000 f2957c f5a685 f8c08c fff59b
c9e0a0 a0d29c 84cca0 84cec9 7fcff2 88abdc 8a94cc 8e86c0 9c88c0 b58ac2 f09cc4 f0999c ec6a4a f2904e f7b050 fff465 acd26e 7fc36c
3db06c 2bb5ad 2ab2ea 4a86c8 4a68b0 5f50a0 8350a0 a552a0 ee5fa5 ee6080 e31219 ea5b0c f39200 ffec00 93c01f 2fa136 2b9a44 1fa596
1e9ee0 1766b0 114a9a 26307e 5c2880 8c1a80 e3007b e6104e a81410 b04a0c b8780e b8a814 6a8c1c 187a2c 147838 147c78 1668a0 174c90
123c70 2a1a60 48145c 6a1460 8c0c58 9c0c34 7a0c0c 7a340a 80560c 88800c 4a6414 0c5a20 0e5c30 0e5c58 0e4870 0e3468 0f2c60 2a1450
36205a 36205a 5a1a4a 5a1a4a d8cfc0 c0b8b0 5f5048 4f4038 4f4038 d0c890 b8b090 5a5a30 305a40 305a50 306060 f0c090 303060 302860`;

function fill(id, list) {
  const box = document.getElementById(id);
  for (const color of list.trim().split(/\s+/)) {
    const cell = document.createElement("i");
    cell.style.background = "#" + color;
    box.append(cell);
  }
}
fill("recent", recent);
fill("palette", palette);
```
